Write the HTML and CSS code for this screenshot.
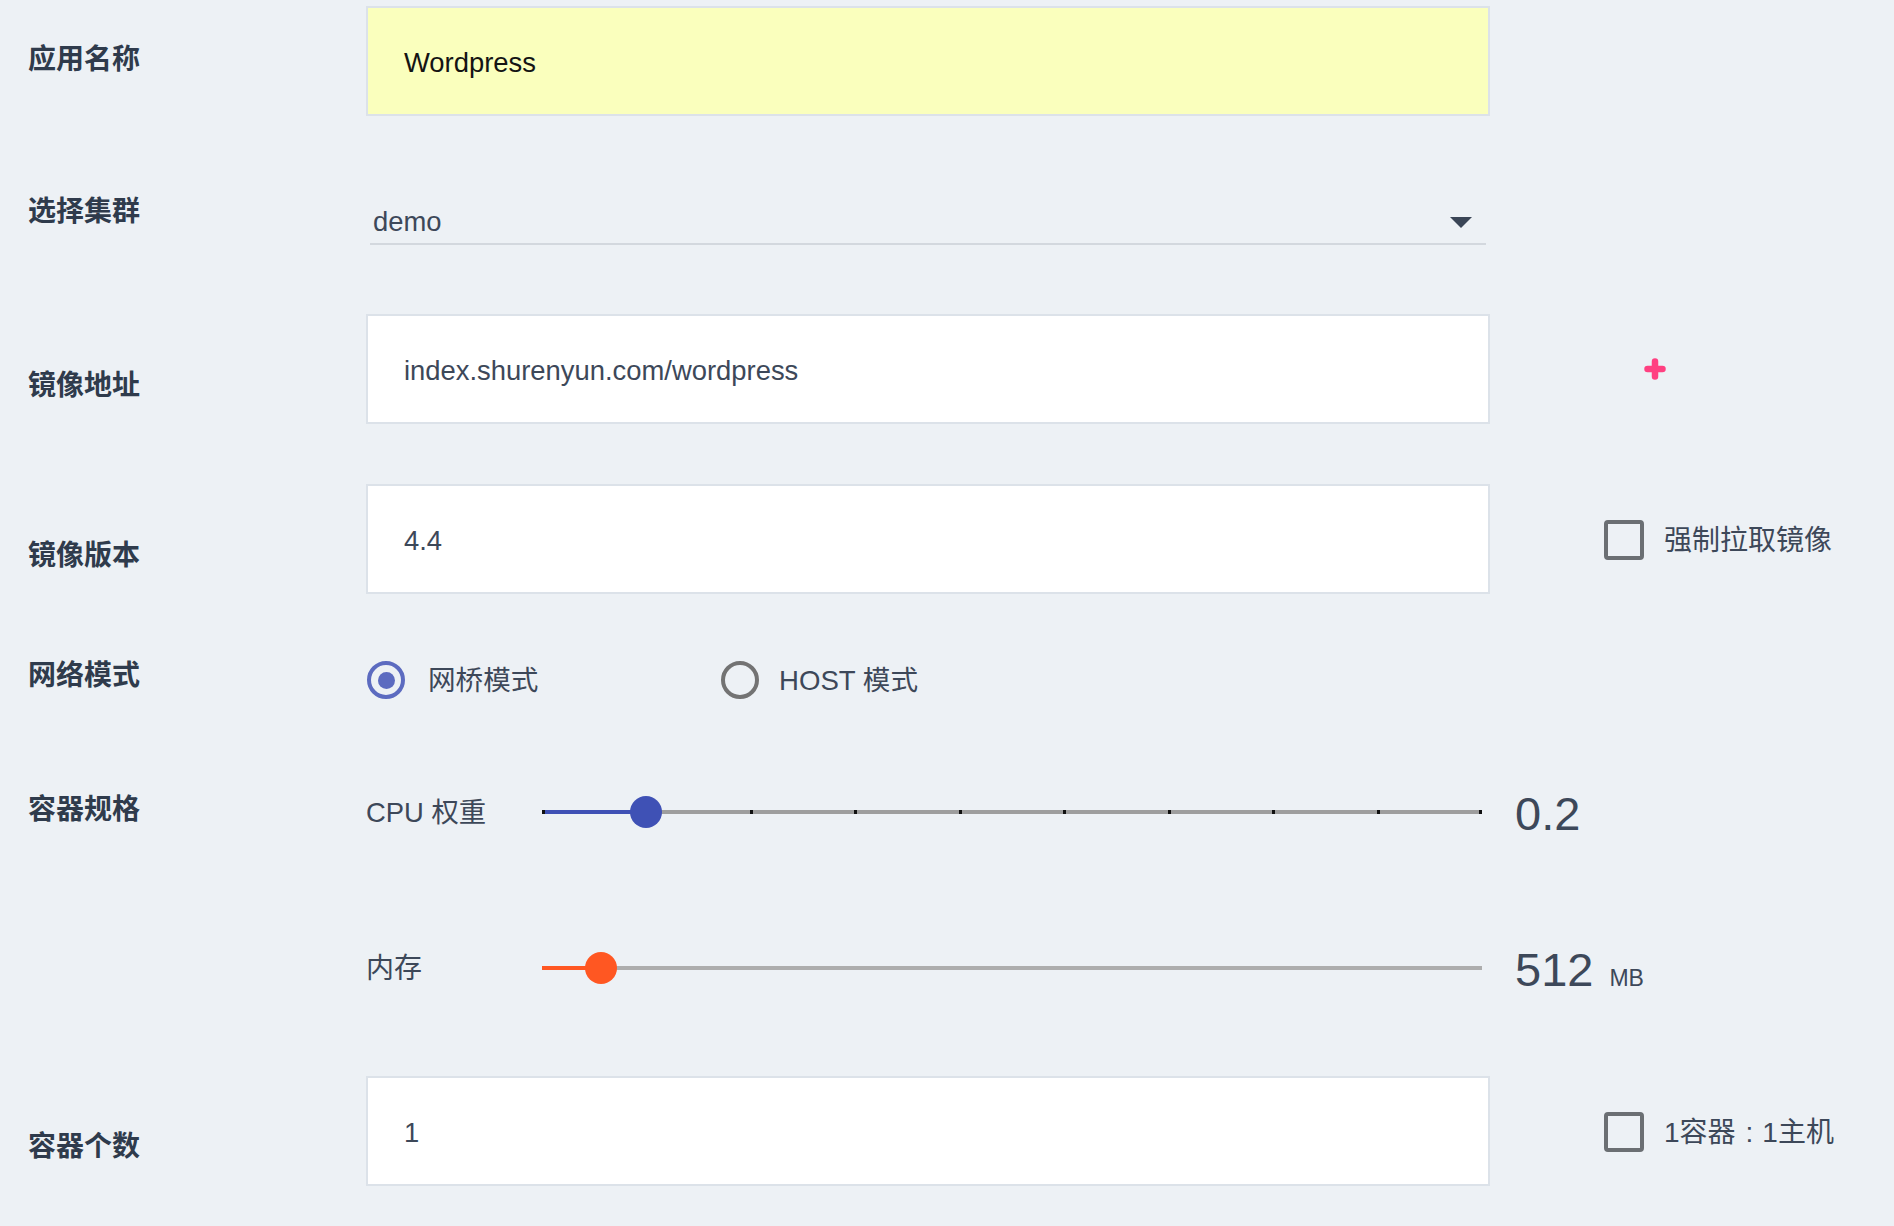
FILE: index.html
```html
<!DOCTYPE html>
<html lang="zh-CN">
<head>
<meta charset="utf-8">
<title>创建应用</title>
<link rel="stylesheet" href="styles.css">
</head>
<body>
<div class="form">

  <div class="row row-name">
    <div class="label">应用名称</div>
    <div class="control">
      <div class="input input-autofill">Wordpress</div>
    </div>
  </div>

  <div class="row row-cluster">
    <div class="label">选择集群</div>
    <div class="control">
      <div class="select">
        <span class="select-text">demo</span>
        <span class="select-arrow"></span>
      </div>
    </div>
  </div>

  <div class="row row-image">
    <div class="label">镜像地址</div>
    <div class="control">
      <div class="input">index.shurenyun.com/wordpress</div>
    </div>
    <div class="extra extra-plus">
      <svg class="plus" width="22" height="22" viewBox="0 0 22 22"><path d="M11 3.5v15M3.5 11h15" stroke="#ff4081" stroke-width="6.5" stroke-linecap="round" fill="none"/></svg>
    </div>
  </div>

  <div class="row row-version">
    <div class="label">镜像版本</div>
    <div class="control">
      <div class="input">4.4</div>
    </div>
    <div class="extra extra-check">
      <span class="checkbox"></span>
      <span class="check-text">强制拉取镜像</span>
    </div>
  </div>

  <div class="row row-network">
    <div class="label">网络模式</div>
    <div class="radios">
      <div class="radio-option radio-first">
        <span class="radio radio-checked"><span class="radio-dot"></span></span>
        <span class="radio-text">网桥模式</span>
      </div>
      <div class="radio-option radio-second">
        <span class="radio"></span>
        <span class="radio-text">HOST 模式</span>
      </div>
    </div>
  </div>

  <div class="row row-spec">
    <div class="label">容器规格</div>
    <div class="slider-row">
      <div class="slider-label">CPU 权重</div>
      <div class="track track-cpu">
        <div class="fill fill-cpu" style="width: 11.11%"></div>
        <span class="tick tick-start"></span>
        <span class="tick" style="left: 22.22%"></span>
        <span class="tick" style="left: 33.33%"></span>
        <span class="tick" style="left: 44.44%"></span>
        <span class="tick" style="left: 55.56%"></span>
        <span class="tick" style="left: 66.67%"></span>
        <span class="tick" style="left: 77.78%"></span>
        <span class="tick" style="left: 88.89%"></span>
        <span class="tick tick-end"></span>
        <span class="thumb thumb-cpu" style="left: 11.11%"></span>
      </div>
      <div class="value"><span class="value-num">0.2</span></div>
    </div>
  </div>

  <div class="row row-memory">
    <div class="label"></div>
    <div class="slider-row">
      <div class="slider-label slider-label-cjk">内存</div>
      <div class="track track-mem">
        <div class="fill fill-mem" style="width: 6.25%"></div>
        <span class="thumb thumb-mem" style="left: 6.25%"></span>
      </div>
      <div class="value"><span class="value-num">512</span><span class="value-unit">MB</span></div>
    </div>
  </div>

  <div class="row row-count">
    <div class="label">容器个数</div>
    <div class="control">
      <div class="input">1</div>
    </div>
    <div class="extra extra-check">
      <span class="checkbox"></span>
      <span class="check-text">1容器<span class="colon">:</span>1主机</span>
    </div>
  </div>

</div>
</body>
</html>
```

FILE: styles.css
```css
* { box-sizing: border-box; }

html, body {
  margin: 0;
  padding: 0;
  background: #edf1f5;
}

body {
  font-family: "Liberation Sans", "Noto Sans CJK SC", sans-serif;
  color: #3d4859;
}

.form {
  padding: 6px 0 0 28px;
}

.row {
  display: flex;
  align-items: flex-start;
}

.label {
  width: 338px;
  flex: none;
  font-size: 28px;
  font-weight: 700;
  line-height: 40px;
  color: #2f3b4c;
  white-space: nowrap;
}

.control {
  width: 1124px;
  flex: none;
}

.input {
  height: 110px;
  border: 2px solid #dce2e9;
  background: #ffffff;
  padding: 3px 0 0 36px;
  display: flex;
  align-items: center;
  font-size: 27.4px;
  color: #3d4859;
}

.input-autofill {
  background: #faffbd;
  color: #141414;
}

/* row offsets */
.row-name .label { margin-top: 34px; }

.row-cluster { margin-top: 70px; }
.row-cluster .label { margin-top: 6px; }

.row-image { margin-top: 69px; }
.row-image .label { margin-top: 52px; }

.row-version { margin-top: 60px; }
.row-version .label { margin-top: 52px; }

.row-network { margin-top: 60px; }
.row-network .label { margin-top: 2px; }

.row-spec { margin-top: 88px; }
.row-spec .label { margin-top: 2px; }

.row-memory { margin-top: 116px; }

.row-count { margin-top: 88px; }
.row-count .label { margin-top: 51px; }

/* select */
.select {
  margin-left: 4px;
  width: 1116px;
  height: 59px;
  border-bottom: 2px solid #d3d8de;
  display: flex;
  justify-content: space-between;
  align-items: flex-start;
  padding: 16px 14px 0 3px;
}

.select-text {
  font-size: 27.4px;
  line-height: 40px;
  color: #3d4859;
}

.select-arrow {
  margin-top: 15px;
  width: 0;
  height: 0;
  border-left: 11px solid transparent;
  border-right: 11px solid transparent;
  border-top: 11px solid #3a4556;
}

/* extras */
.extra {
  align-self: stretch;
  display: flex;
  align-items: center;
  padding-top: 1px;
}

.extra-plus { padding-left: 154px; padding-top: 0; }
.plus { display: block; }

.extra-check { padding-left: 114px; }

.checkbox {
  width: 40px;
  height: 40px;
  border: 4px solid #6b6f73;
  border-radius: 4px;
  flex: none;
}

.check-text {
  margin-left: 20px;
  padding-top: 3px;
  font-size: 28px;
  line-height: 40px;
  color: #3d4859;
  white-space: nowrap;
}

.colon {
  padding: 0 9px 0 10px;
}

/* radios */
.radios {
  margin-top: 6px;
  height: 40px;
  display: flex;
  align-items: center;
}

.radio-option {
  display: flex;
  align-items: center;
}

.radio-first {
  width: 354px;
  margin-left: 1px;
}

.radio {
  width: 38px;
  height: 38px;
  border-radius: 50%;
  border: 4px solid #737373;
  display: flex;
  align-items: center;
  justify-content: center;
  flex: none;
}

.radio-checked {
  border-color: #5c6bc0;
}

.radio-dot {
  width: 17px;
  height: 17px;
  border-radius: 50%;
  background: #5c6bc0;
}

.radio-text {
  margin-left: 23px;
  padding-top: 2px;
  font-size: 27.6px;
  line-height: 40px;
  color: #3d4859;
  white-space: nowrap;
}

.radio-second .radio-text { margin-left: 20px; }

/* sliders */
.slider-row {
  margin-top: 4px;
  height: 40px;
  display: flex;
  align-items: center;
}

.row-memory .slider-row { margin-top: 0; }

.slider-label {
  width: 176px;
  flex: none;
  padding-top: 2px;
  font-size: 27.4px;
  line-height: 40px;
  color: #3d4859;
  white-space: nowrap;
}

.slider-label-cjk { font-size: 28px; }

.track {
  position: relative;
  width: 940px;
  height: 4px;
  flex: none;
}

.track-cpu { background: #9e9e9e; }
.track-mem { background: #adadad; }

.fill {
  position: absolute;
  left: 0;
  top: 0;
  height: 4px;
}

.fill-cpu { background: #3f51b5; }
.fill-mem { background: #ff5722; }

.tick {
  position: absolute;
  top: 0;
  width: 3px;
  height: 4px;
  margin-left: -1px;
  background: #111;
}

.tick-start { left: 0; margin-left: 0; }
.tick-end { right: 0; margin-left: 0; }

.thumb {
  position: absolute;
  top: 50%;
  width: 32px;
  height: 32px;
  border-radius: 50%;
  transform: translate(-50%, -50%);
}

.thumb-cpu { background: #3f51b5; }
.thumb-mem { background: #ff5722; }

.value {
  margin-left: 33px;
  padding-top: 3px;
  display: flex;
  align-items: baseline;
  color: #3d4859;
  white-space: nowrap;
}

.row-memory .value { padding-top: 5px; }

.value-num {
  font-size: 47px;
  line-height: 40px;
  font-weight: 300;
}

.value-unit {
  margin-left: 16px;
  font-size: 23px;
}
```
